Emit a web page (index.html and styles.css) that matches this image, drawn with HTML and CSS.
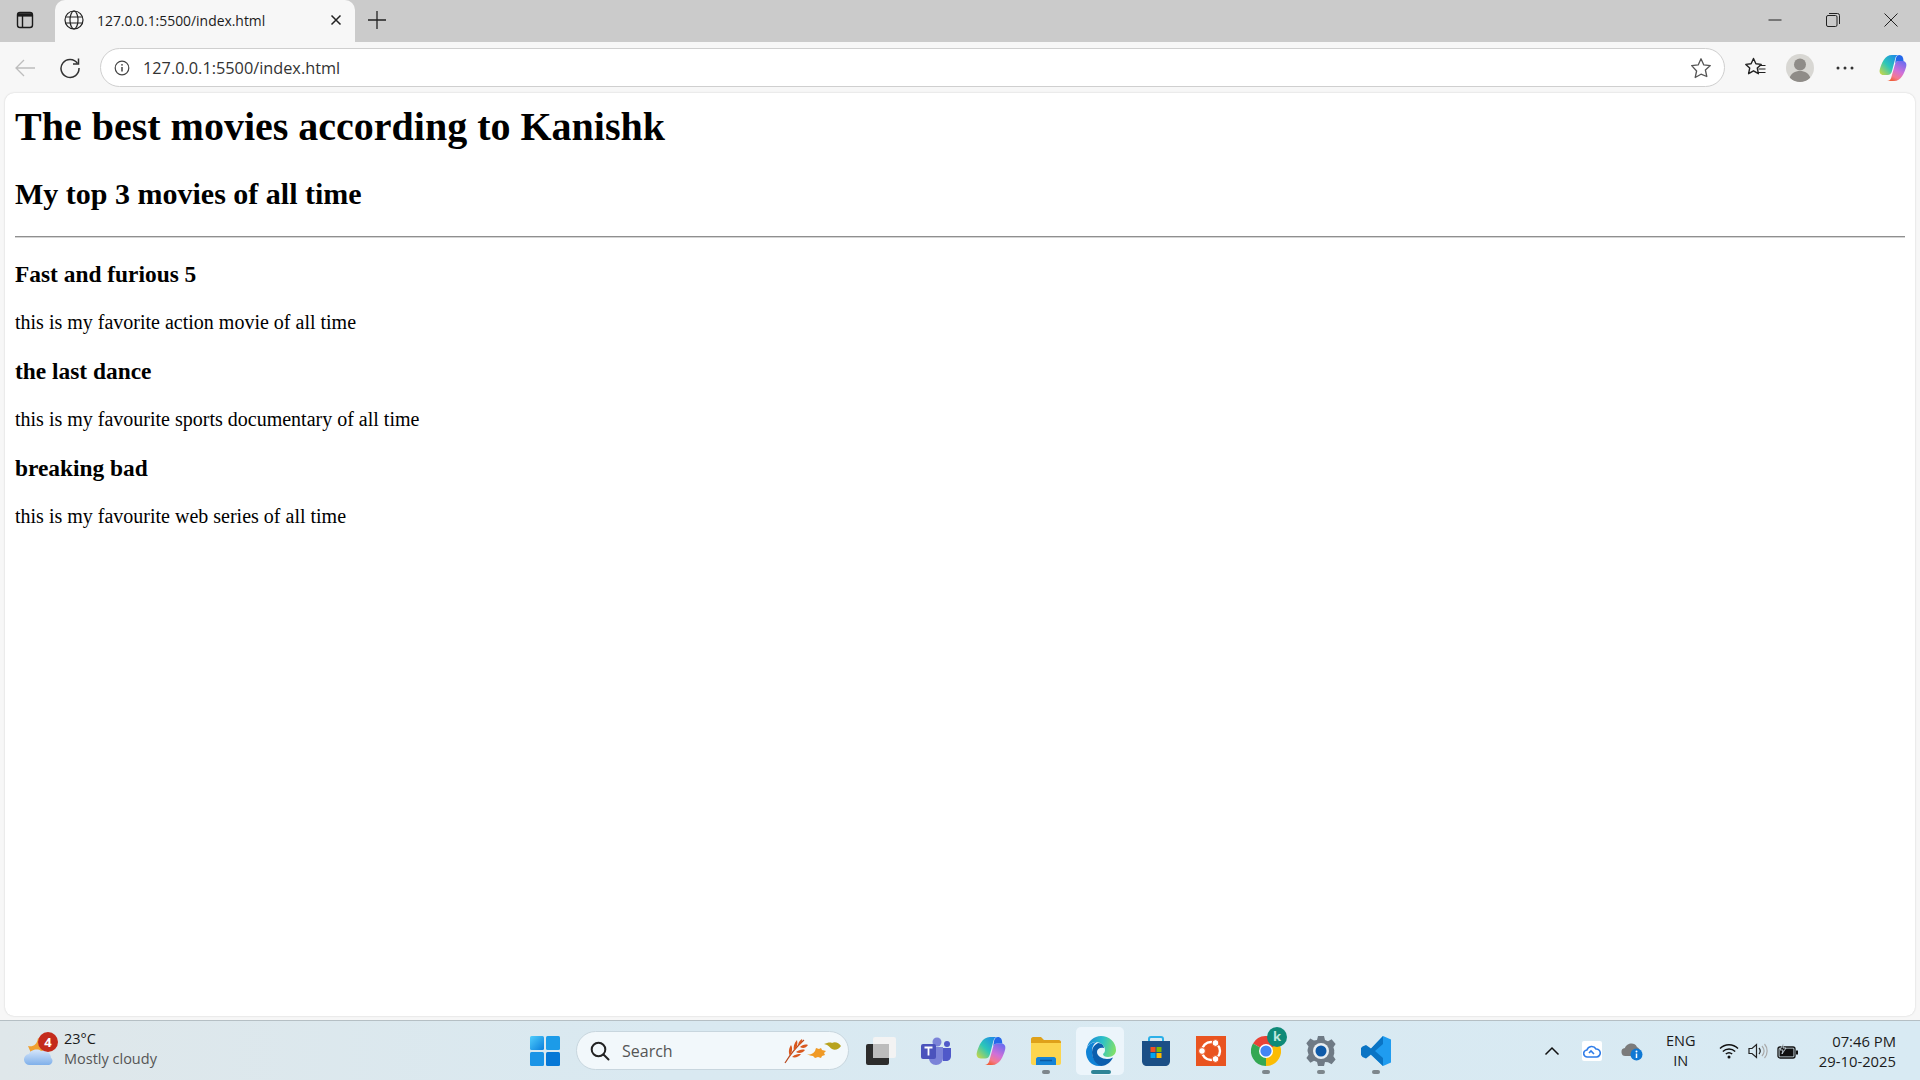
FILE: index.html
```html
<!DOCTYPE html>
<html lang="en">
<head>
    <meta charset="UTF-8">
    <title>127.0.0.1:5500/index.html</title>
    <link rel="stylesheet" href="styles.css">
</head>
<body>
    <div class="window">
        <!-- Tab strip -->
        <div class="tabstrip">
            <div class="tab-actions">
                <svg width="20" height="20" viewBox="0 0 20 20" fill="none" stroke="#1b1b1b" stroke-width="1.4"><rect x="2.5" y="2.5" width="15" height="15" rx="2.5"/><path d="M3 3.2h14v3.4H3z" fill="#1b1b1b" stroke="none"/><path d="M7.5 6v11"/></svg>
            </div>
            <div class="tab">
                <svg class="tab-globe" width="20" height="20" viewBox="0 0 20 20" fill="none" stroke="#222" stroke-width="1.2"><circle cx="10" cy="10" r="9"/><ellipse cx="10" cy="10" rx="4" ry="9"/><path d="M1.6 7h16.8M1.6 13h16.8"/></svg>
                <span class="tab-title">127.0.0.1:5500/index.html</span>
                <svg class="tab-close" width="12" height="12" viewBox="0 0 12 12" stroke="#222" stroke-width="1.5"><path d="M1.5 1.5l9 9M10.500 1.500l-9 9"/></svg>
            </div>
            <svg class="tab-new" width="18" height="18" viewBox="0 0 18 18" stroke="#222" stroke-width="1.3"><path d="M9 0v18M0 9h18"/></svg>
            <div class="window-controls">
                <div class="window-btn"><svg width="14" height="14" viewBox="0 0 14 14" stroke="#222" stroke-width="1"><path d="M0.500 7h13"/></svg></div>
                <div class="window-btn"><svg width="14" height="14" viewBox="0 0 14 14" fill="none" stroke="#222" stroke-width="1"><rect x="0.500" y="2.500" width="10.500" height="11" rx="1.500"/><path d="M3 0.500h8.500a2 2 0 0 1 2 2V11"/></svg></div>
                <div class="window-btn"><svg width="14" height="14" viewBox="0 0 14 14" stroke="#222" stroke-width="1"><path d="M0.500 0.500l13 13M13.500 0.500l-13 13"/></svg></div>
            </div>
        </div>

        <!-- Toolbar -->
        <div class="toolbar">
            <div class="nav-btn"><svg width="20" height="18" viewBox="0 0 20 18" fill="none" stroke="#bdbdbd" stroke-width="1.3"><path d="M20 9H1M9 1L1 9l8 8"/></svg></div>
            <div class="nav-btn"><svg width="22" height="22" viewBox="0 0 22 22" fill="none" stroke="#333" stroke-width="1.5"><path d="M18.500 6.500A9 9 0 1 0 20 11"/><path d="M19.500 1.500v5.500H14"/></svg></div>
            <div class="address-bar">
                <svg class="info-icon" width="16" height="16" viewBox="0 0 16 16" fill="none" stroke="#444" stroke-width="1.200"><circle cx="8" cy="8" r="6.800"/><path d="M8 7v4.500" stroke-width="1.500"/><circle cx="8" cy="4.800" r="0.900" fill="#444" stroke="none"/></svg>
                <span class="url">127.0.0.1:5500/index.html</span>
                <svg class="star-icon" width="22" height="22" viewBox="0 0 22 22" fill="none" stroke="#555" stroke-width="1.300" stroke-linejoin="round"><path d="M11 1.800l2.800 6.100 6.500.7-4.900 4.400 1.400 6.500L11 17.200l-5.800 3.300 1.400-6.500L1.700 8.600l6.500-.7z"/></svg>
            </div>
            <div class="toolbar-icons">
                <div class="tool-btn"><svg width="22" height="22" viewBox="0 0 22 22" fill="none" stroke="#222" stroke-width="1.400" stroke-linejoin="round"><path d="M9.500 1.500l2.400 5.300 5.300.6-3.900 3.700 1.100 5.600-4.900-2.900-4.900 2.900 1.100-5.600L1.800 7.400l5.300-.6z"/><path d="M15.500 8.500h6M14.500 12h7M14.500 15.500h7" stroke-width="1.200"/></svg></div>
                <div class="tool-btn"><div class="avatar"><svg width="28" height="28" viewBox="0 0 28 28" fill="#8f8c88"><circle cx="14" cy="10.500" r="6"/><path d="M3.500 24.500c1.500-5.500 5.500-7.500 10.500-7.500s9 2 10.500 7.500A13.800 13.800 0 0 1 14 28a13.800 13.800 0 0 1-10.500-3.500z"/></svg></div></div>
                <div class="tool-btn"><svg width="18" height="4" viewBox="0 0 18 4" fill="#333"><circle cx="2" cy="2" r="1.500"/><circle cx="9" cy="2" r="1.500"/><circle cx="16" cy="2" r="1.500"/></svg></div>
                <div class="tool-btn tool-copilot">
                    <svg width="28" height="28" viewBox="0 0 28 28"><defs><linearGradient id="cpA" x1="1" y1="0" x2="0" y2="1"><stop offset="0" stop-color="#1a7ff0"/><stop offset="0.55" stop-color="#2cc7b8"/><stop offset="1" stop-color="#d8d83c"/></linearGradient><linearGradient id="cpB" x1="0.800" y1="0" x2="0.300" y2="1"><stop offset="0" stop-color="#6a6cf0"/><stop offset="0.5" stop-color="#d070d8"/><stop offset="0.800" stop-color="#f47a90"/><stop offset="1" stop-color="#f0603c"/></linearGradient></defs><path d="M13 1h7c-2 0-3 1.200-3.600 3L13 17c-.7 2.500-2 4-4.500 4H4.500C1.500 21 0 18.500 .8 15.500 2.500 9 6 1 13 1z" fill="url(#cpA)"/><path d="M19.500 7h4c3 0 4.500 2.500 3.700 5.500C25.500 19 22 27 15 27H8c2 0 3.500-1.200 4.200-3.300L15.800 11c.6-2.300 1.700-4 3.700-4z" fill="url(#cpB)"/><path d="M17 4c.6-1.800 1.600-3 3.500-3 2.500 0 4 2 4 6h-5c-1.800 0-2.600 1-3.500 3z" fill="#2468ea"/></svg>
                </div>
            </div>
        </div>

        <!-- Page -->
        <div class="page">
            <h1>The best movies according to Kanishk</h1>
            <h2>My top 3 movies of all time</h2>
            <hr>
            <h3>Fast and furious 5</h3>
            <p>this is my favorite action movie of all time</p>
            <h3>the last dance</h3>
            <p>this is my favourite sports documentary of all time</p>
            <h3>breaking bad</h3>
            <p>this is my favourite web series of all time</p>
        </div>
    </div>

    <!-- Taskbar -->
    <div class="taskbar">
        <div class="weather">
            <div class="weather-icon">
                <svg width="32" height="34" viewBox="0 0 32 34"><defs><linearGradient id="cloud" x1="0" y1="0" x2="0" y2="1"><stop offset="0" stop-color="#d6e6fa"/><stop offset="1" stop-color="#7fb0ea"/></linearGradient></defs><path d="M4 12c5 1 9-1 10-8 5 3 7 10 4 15H7z" fill="#f0a030"/><path d="M6 31a5.500 5.500 0 0 1-1-11c1-4 9-6 12-3 5-1 10 2 10 7 3 2 1 7-2 7z" fill="url(#cloud)"/></svg>
                <span class="weather-badge">4</span>
            </div>
            <div class="weather-text">
                <span class="temp">23°C</span>
                <span class="cond">Mostly cloudy</span>
            </div>
        </div>

        <div class="task-center">
            <div class="slot">
                <svg width="30" height="30" viewBox="0 0 30 30"><defs><linearGradient id="winA" x1="0" y1="0" x2="1" y2="1"><stop offset="0" stop-color="#50cdfc"/><stop offset="1" stop-color="#0a7fdc"/></linearGradient></defs><rect width="14" height="14" rx="1.500" fill="url(#winA)"/><rect x="16" width="14" height="14" rx="1.500" fill="#1c9be8"/><rect y="16" width="14" height="14" rx="1.500" fill="#1a94e6"/><rect x="16" y="16" width="14" height="14" rx="1.500" fill="#0678d6"/></svg>
            </div>
            <div class="search-box">
                <svg width="20" height="20" viewBox="0 0 20 20" fill="none" stroke="#222" stroke-width="2"><circle cx="8.500" cy="8.500" r="6.800"/><path d="M13.500 13.500l5 5" stroke-linecap="round"/></svg>
                <span class="search-label">Search</span>
                <svg class="search-leaves" width="58" height="28" viewBox="0 0 58 28"><path d="M1 26C6 18 12 10 20 3" fill="none" stroke="#b84a20" stroke-width="1.200"/><path d="M6 19C4 15 5 11 7 8c2 3 1 8-1 11zM10 14c-1-4 0-8 3-11 1 4 0 8-3 11zM14 9c0-3 1-5 4-7 1 3-1 5-4 7zM8 20c3-3 6-3 9-3-2 3-6 4-9 3zM12 15c3-2 6-3 9-2-2 3-6 4-9 2zM16 10c2-2 5-3 8-2-2 3-5 4-8 2z" fill="#d9581e"/><path d="M23 17c3 1 6 0 8-3l1-3 3 1 2-1 1 2 4 1-2 2 1 2-3 1-1 2-3-1-3 1-2-2c-2 0-4-1-6-2z" fill="#f09a26"/><path d="M40 7c3-1 6-2 8-1 3-2 7 0 9 3-2 3-6 5-9 3-2-1-3-4-8-5z" fill="#b8a31e"/></svg>
            </div>
            <div class="slot">
                <svg width="30" height="28" viewBox="0 0 30 28"><rect x="7" y="0" width="23" height="21" rx="2" fill="#f3f3f3"/><rect y="7" width="23" height="21" rx="2" fill="#2c2c2c"/><rect x="7" y="7" width="16" height="14" fill="#bcbcbc"/></svg>
            </div>
            <div class="slot">
                <svg width="30" height="28" viewBox="0 0 30 28"><circle cx="16" cy="5" r="4.500" fill="#7b83d8"/><circle cx="26" cy="7" r="3" fill="#5059c9"/><path d="M22 11h8v8c0 3-2 5-5 5h-3z" fill="#5059c9"/><path d="M8 10h14v11c0 4-3 7-7 7s-7-3-7-7z" fill="#7b83d8"/><rect y="7" width="15" height="15" rx="2" fill="#4b53bc"/><path d="M3.500 10.500h8M7.500 10.500v8" stroke="#fff" stroke-width="1.800"/></svg>
            </div>
            <div class="slot">
                <svg width="30" height="30" viewBox="0 0 28 28"><defs><linearGradient id="cpA2" x1="1" y1="0" x2="0" y2="1"><stop offset="0" stop-color="#1a7ff0"/><stop offset="0.55" stop-color="#2cc7b8"/><stop offset="1" stop-color="#d8d83c"/></linearGradient><linearGradient id="cpB2" x1="0.800" y1="0" x2="0.300" y2="1"><stop offset="0" stop-color="#6a6cf0"/><stop offset="0.5" stop-color="#d070d8"/><stop offset="0.800" stop-color="#f47a90"/><stop offset="1" stop-color="#f0603c"/></linearGradient></defs><path d="M13 1h7c-2 0-3 1.200-3.600 3L13 17c-.7 2.500-2 4-4.500 4H4.500C1.500 21 0 18.500 .8 15.500 2.500 9 6 1 13 1z" fill="url(#cpA2)"/><path d="M19.500 7h4c3 0 4.500 2.500 3.700 5.500C25.500 19 22 27 15 27H8c2 0 3.500-1.200 4.200-3.300L15.800 11c.6-2.300 1.700-4 3.700-4z" fill="url(#cpB2)"/><path d="M17 4c.6-1.800 1.600-3 3.500-3 2.500 0 4 2 4 6h-5c-1.800 0-2.600 1-3.500 3z" fill="#2468ea"/></svg>
            </div>
            <div class="slot running">
                <svg width="30" height="28" viewBox="0 0 30 28"><path d="M0 2c0-1 1-2 2-2h8l3 3h15c1 0 2 1 2 2v4H0z" fill="#dfa11a"/><path d="M0 6h30v20c0 1-1 2-2 2H2c-1 0-2-1-2-2z" fill="#fcd54e"/><path d="M5 28v-6c0-1 1-2 2-2h16c1 0 2 1 2 2v6z" fill="#1583d6"/><path d="M9 23.500h12" stroke="#0b5aa3" stroke-width="1.500"/></svg>
            </div>
            <div class="slot active">
                <svg width="30" height="30" viewBox="0 0 30 30"><defs><linearGradient id="edgeB" x1="0" y1="0.300" x2="1" y2="0.500"><stop offset="0" stop-color="#1a86d8"/><stop offset="0.500" stop-color="#2cc0c8"/><stop offset="1" stop-color="#7fe06a"/></linearGradient></defs><path d="M15 0C23 0 30 6 30 14c0 4-3 7-8 7-3 0-5-1-5-3 1-1 2-2 2-4 0-4-4-8-9-8C6 6 2 9 1 12 2 5 8 0 15 0z" fill="url(#edgeB)"/><path d="M1 12C3 8 7 6 11 6c-4 2-5 6-5 10 0 6 4 11 10 13.500-1 .3-2 .5-3 .5C5 30 0 23 0 16c0-1.500.4-3 1-4z" fill="#1083d6"/><path d="M6 16c0-4 2-7 6-9 4 0 6 3 6 5-4-1-7 1-7 4 0 4 5 7 10 7 2 0 4-.5 6-1.500-2 4-6 8.500-12 8.500C9 28 6 22 6 16z" fill="#0c5fae"/></svg>
            </div>
            <div class="slot">
                <svg width="30" height="30" viewBox="0 0 30 30"><path d="M8 6V3c0-1 1-2 2-2h10c1 0 2 1 2 2v3" fill="none" stroke="#2bb0e8" stroke-width="2"/><path d="M1 5h28v20c0 3-2 5-5 5H6c-3 0-5-2-5-5z" fill="#1b4f86"/><rect x="9.500" y="11" width="5" height="5" fill="#f25022"/><rect x="15.500" y="11" width="5" height="5" fill="#7fba00"/><rect x="9.500" y="17" width="5" height="5" fill="#00a4ef"/><rect x="15.500" y="17" width="5" height="5" fill="#ffb900"/></svg>
            </div>
            <div class="slot">
                <svg width="30" height="30" viewBox="0 0 30 30"><rect width="30" height="30" fill="#e95420"/><circle cx="15" cy="15" r="9" fill="none" stroke="#fff" stroke-width="2.400"/><circle cx="6" cy="15" r="3.400" fill="#fff" stroke="#e95420"/><circle cx="19.500" cy="7" r="3.400" fill="#fff" stroke="#e95420"/><circle cx="19.500" cy="23" r="3.400" fill="#fff" stroke="#e95420"/></svg>
            </div>
            <div class="slot running">
                <svg width="30" height="30" viewBox="0 0 30 30"><path d="M15 15L2 7.500A15 15 0 0 1 28 7.500z" fill="#ea4335"/><path d="M15 15l13-7.500A15 15 0 0 1 15 30z" fill="#fbbc04"/><path d="M15 15v15A15 15 0 0 1 2 7.500z" fill="#34a853"/><circle cx="15" cy="15" r="7" fill="#fff"/><circle cx="15" cy="15" r="5.600" fill="#4285f4"/></svg>
                <span class="chrome-badge">k</span>
            </div>
            <div class="slot running">
                <svg width="30" height="30" viewBox="0 0 30 30"><path d="M12 0h6l1 4 3 1.300 3.600-2 4 4.700-2.200 3.300.9 3-.1 1.500.1 1.500-.9 3 2.200 3.300-4 4.700-3.600-2L19 26l-1 4h-6l-1-4-3-1.300-3.600 2-4-4.700 2.200-3.300-.9-3L1.500 15l.1-1.500.9-3L.3 7.200l4-4.700 3.600 2L11 4z" fill="#6f7a85"/><circle cx="15" cy="15" r="8" fill="#e8eef2"/><circle cx="15" cy="15" r="5.500" fill="#0f5aa8"/></svg>
            </div>
            <div class="slot running">
                <svg width="30" height="30" viewBox="0 0 30 30"><path d="M22 0l8 3.500v23L22 30 7 16z" fill="#1f9cf0"/><path d="M22 0v8l-8 7 8 7v8L10 18.500l-5 4-3.500-1.500-1.500-2v-7l1.500-1.500L5 9l5 3.500z" fill="#0a74c4"/></svg>
            </div>
        </div>

        <div class="tray">
            <div class="tray-icon"><svg width="16" height="10" viewBox="0 0 16 10" fill="none" stroke="#111" stroke-width="1.500"><path d="M1.500 8.500L8 2l6.500 6.500"/></svg></div>
            <div class="tray-icon"><div class="cloud-tile"><svg width="18" height="14" viewBox="0 0 18 14" fill="none" stroke="#2f7de8" stroke-width="1.600"><path d="M4.500 13a3.500 3.500 0 0 1-.6-7A5 5 0 0 1 13 5a4 4 0 0 1 .5 8zM6 9l2-2 3 3"/></svg></div></div>
            <div class="tray-icon">
                <svg width="22" height="20" viewBox="0 0 22 20"><path d="M5 15a4 4 0 0 1-1-8c1-4 9-7 12-1 2 1 3 3 3 4-3 0-6 2-7 5z" fill="#7b7b7b"/><circle cx="15.500" cy="13.500" r="6" fill="#0f78d4"/><path d="M15.500 12.500v4.500" stroke="#fff" stroke-width="1.500"/><circle cx="15.500" cy="10.500" r="1" fill="#fff"/></svg>
            </div>
            <div class="tray-lang"><span>ENG</span><span>IN</span></div>
            <div class="tray-status">
                <svg width="20" height="16" viewBox="0 0 20 16" fill="none" stroke="#111" stroke-width="1.400"><path d="M1 5.500c5-5 13-5 18 0M3.800 8.500c3.500-3.300 9-3.300 12.400 0M6.800 11c1.800-1.500 4.600-1.500 6.400 0"/><circle cx="10" cy="14" r="1.500" fill="#111" stroke="none"/></svg>
                <svg width="20" height="16" viewBox="0 0 20 16" fill="none" stroke="#222" stroke-width="1.200"><path d="M1 5.500h3l4.500-4v13L4 10.500H1z"/><path d="M11 5c1.500 1.800 1.500 4.200 0 6" /><path d="M14 3c2.500 3 2.500 7 0 10M16.500 1c3.500 4 3.500 10 0 14" stroke="#aaa"/></svg>
                <svg width="22" height="16" viewBox="0 0 22 16"><rect x="1" y="4" width="17" height="11" rx="2" fill="none" stroke="#111" stroke-width="1.300"/><rect x="2.500" y="5.500" width="14" height="8" fill="#111"/><rect x="19" y="7.500" width="2" height="4" fill="#111"/><path d="M6.500 0L3 7h3l-1 4 4-6H6z" fill="#111" stroke="#dceaf2" stroke-width="0.800"/></svg>
            </div>
            <div class="clock"><span>07:46 PM</span><span>29-10-2025</span></div>
        </div>
    </div>
</body>
</html>
```

FILE: styles.css
```css
* {
    box-sizing: border-box;
}

html, body {
    margin: 0;
    padding: 0;
    height: 1080px;
    overflow: hidden;
}

body {
    display: flex;
    flex-direction: column;
    background: #f7f7f7;
    font-family: "Open Sans", "Noto Sans", sans-serif;
    color: #1b1b1b;
}

.window {
    flex: 1;
    display: flex;
    flex-direction: column;
    min-height: 0;
}

/* Tab strip */
.tabstrip {
    height: 42px;
    display: flex;
    align-items: flex-start;
    background: #cbcbcb;
    flex-shrink: 0;
}

.tab-actions {
    width: 55px;
    height: 40px;
    display: flex;
    align-items: center;
    justify-content: center;
    padding-right: 6px;
}

.tab {
    width: 300px;
    height: 42px;
    display: flex;
    align-items: center;
    padding: 0 13px 2px 9px;
    background: #f7f7f7;
    border-radius: 10px 10px 0 0;
}

.tab-globe {
    flex-shrink: 0;
}

.tab-title {
    flex: 1;
    margin-left: 13px;
    font-size: 13.9px;
    white-space: nowrap;
}

.tab-new {
    margin: 11px 0 0 13px;
}

.window-controls {
    margin-left: auto;
    display: flex;
}

.window-btn {
    width: 58px;
    height: 40px;
    display: flex;
    align-items: center;
    justify-content: center;
}

/* Toolbar */
.toolbar {
    height: 51px;
    display: flex;
    align-items: center;
    padding-left: 2px;
    flex-shrink: 0;
}

.nav-btn {
    width: 45px;
    display: flex;
    justify-content: center;
}

.address-bar {
    width: 1625px;
    height: 39px;
    margin-left: 8px;
    display: flex;
    align-items: center;
    padding: 0 12px 0 13px;
    background: #fff;
    border: 1px solid #cfcfcf;
    border-radius: 20px;
}

.url {
    flex: 1;
    margin-left: 13px;
    font-size: 16.3px;
    color: #333;
}

.toolbar-icons {
    display: flex;
    margin-left: 7px;
}

.tool-btn {
    width: 45px;
    display: flex;
    justify-content: center;
    align-items: center;
}

.tool-copilot {
    margin-left: 3px;
}

.avatar {
    width: 28px;
    height: 28px;
    border-radius: 50%;
    background: #d8d7d3;
    overflow: hidden;
}

/* Page */
.page {
    flex: 1;
    margin: 0 5px 4px;
    padding: 10px;
    background: #fff;
    border-radius: 9px;
    box-shadow: 0 0 2px rgba(0, 0, 0, 0.18);
    color: #000;
    font-family: "Liberation Serif", "Times New Roman", serif;
    font-size: 20px;
    overflow: hidden;
}

.page h1 {
    font-size: 40px;
    margin: 0 0 26.8px;
}

.page h2 {
    font-size: 30px;
    margin: 24.9px 0;
}

.page h3 {
    font-size: 23.4px;
    margin: 23.4px 0;
}

.page p {
    margin: 20px 0;
}

.page hr {
    margin: 10px 0;
    border: 0;
    border-top: 1px solid #8f8f8f;
    border-bottom: 1px solid #d4d4d4;
}

/* Taskbar */
.taskbar {
    height: 60px;
    display: grid;
    grid-template-columns: 1fr auto 1fr;
    align-items: center;
    flex-shrink: 0;
    background: linear-gradient(90deg, #dfe7ea 0%, #d9e9f1 35%, #d8eaf3 100%);
    border-top: 1px solid #b5bfc4;
}

.weather {
    display: flex;
    align-items: center;
    padding-left: 24px;
}

.weather-icon {
    position: relative;
    width: 32px;
    height: 34px;
    margin-right: 8px;
}

.weather-badge {
    position: absolute;
    top: -2px;
    left: 14px;
    width: 20px;
    height: 20px;
    border-radius: 50%;
    background: #c42b1c;
    color: #fff;
    font-size: 13px;
    font-weight: 700;
    line-height: 20px;
    text-align: center;
}

.weather-text {
    display: flex;
    flex-direction: column;
    padding-bottom: 3px;
    font-size: 14.5px;
    line-height: 20px;
}

.temp {
    color: #1b1b1b;
}

.cond {
    color: #555;
}

.task-center {
    display: flex;
    align-items: center;
}

.slot {
    position: relative;
    width: 55px;
    height: 48px;
    display: flex;
    align-items: center;
    justify-content: center;
}

.slot.active::before {
    content: "";
    position: absolute;
    top: 0;
    left: 3px;
    right: 4px;
    bottom: 0;
    background: #ecf5fb;
    border-radius: 5px;
}

.slot.active svg {
    position: relative;
}

.slot.running::after,
.slot.active::after {
    content: "";
    position: absolute;
    left: 50%;
    bottom: 1px;
    width: 8px;
    height: 4px;
    margin-left: -4px;
    background: #7d868c;
    border-radius: 2px;
}

.slot.active::after {
    width: 20px;
    margin-left: -10px;
    background: #2f8496;
}

.chrome-badge {
    position: absolute;
    top: 0;
    left: 29px;
    width: 20px;
    height: 20px;
    border-radius: 50%;
    background: #0f8a78;
    color: #bfe8df;
    font-size: 13px;
    font-weight: 700;
    line-height: 18px;
    text-align: center;
}

.search-box {
    width: 273px;
    height: 39px;
    margin: 0 4px;
    display: flex;
    align-items: center;
    padding: 0 6px 0 13px;
    background: #f2f8fb;
    border: 1px solid #c8d6de;
    border-radius: 20px;
}

.search-label {
    flex: 1;
    margin-left: 12px;
    font-size: 16px;
    color: #555;
}

.tray {
    display: flex;
    align-items: center;
    justify-content: flex-end;
    padding-right: 24px;
}

.tray-icon {
    width: 40px;
    display: flex;
    align-items: center;
    justify-content: center;
}

.cloud-tile {
    width: 20px;
    height: 20px;
    display: flex;
    align-items: center;
    justify-content: center;
    background: #fff;
    border-radius: 2px;
}

.tray-lang {
    width: 58px;
    display: flex;
    flex-direction: column;
    align-items: center;
    font-size: 14.5px;
    line-height: 20px;
}

.tray-status {
    display: flex;
    align-items: center;
    gap: 9px;
    margin: 0 20px 0 9px;
}

.clock {
    display: flex;
    flex-direction: column;
    align-items: flex-end;
    font-size: 14.8px;
    line-height: 20px;
}
```
